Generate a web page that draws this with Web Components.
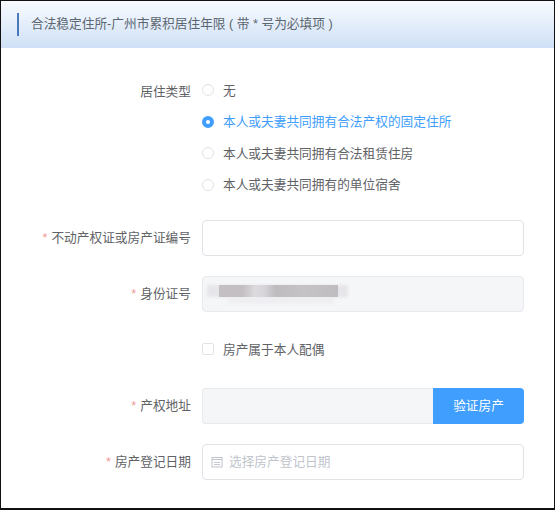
<!DOCTYPE html>
<html lang="zh">
<head>
<meta charset="utf-8">
<title>合法稳定住所</title>
<style>
  html, body { margin: 0; padding: 0; background: #fff; }
  body { font-family: "Liberation Sans", "Noto Sans CJK SC", sans-serif; font-size: 12.7px; color: #606266; }
</style>
</head>
<body>
<form-panel heading="合法稳定住所-广州市累积居住年限 ( 带 * 号为必填项 )">
  <form-row label="居住类型" style="--row-gap:26.4px;--label-top:2px">
    <radio-group>
      <radio-option>无</radio-option>
      <radio-option checked>本人或夫妻共同拥有合法产权的固定住所</radio-option>
      <radio-option>本人或夫妻共同拥有合法租赁住房</radio-option>
      <radio-option>本人或夫妻共同拥有的单位宿舍</radio-option>
    </radio-group>
  </form-row>
  <form-row label="不动产权证或房产证编号" required style="--row-gap:20px"><text-box></text-box></form-row>
  <form-row label="身份证号" required style="--row-gap:26px"><text-box disabled><blur-mask></blur-mask></text-box></form-row>
  <form-row style="--row-gap:30px"><check-option>房产属于本人配偶</check-option></form-row>
  <form-row label="产权地址" required style="--row-gap:20px"><text-box disabled append="验证房产"></text-box></form-row>
  <form-row label="房产登记日期" required><text-box placeholder="选择房产登记日期" date></text-box></form-row>
</form-panel>

<script>
class FormPanel extends HTMLElement {
  constructor() {
    super();
    this.attachShadow({ mode: 'open' });
    this.shadowRoot.innerHTML = `
      <style>
        :host { display: block; box-sizing: border-box; width: 555px; height: 510px; border: 1px solid #111; border-width: 1px 1px 2px 1px; background: #fff; }
        .head { height: 47px; box-sizing: border-box; padding-left: 16px; display: flex; align-items: center; background: linear-gradient(#f8fbff, #cfe0f6); }
        .title { border-left: 2px solid #4a7ab8; height: 23px; line-height: 23px; padding-left: 12px; color: #5b6670; font-size: 12.7px; white-space: nowrap; }
        .body { padding-top: 24px; }
      </style>
      <div class="head"><div class="title"></div></div>
      <div class="body"><slot></slot></div>`;
    this.shadowRoot.querySelector('.title').textContent = this.getAttribute('heading');
  }
}
customElements.define('form-panel', FormPanel);

class FormRow extends HTMLElement {
  constructor() {
    super();
    this.attachShadow({ mode: 'open' });
    this.shadowRoot.innerHTML = `
      <style>
        :host { display: grid; grid-template-columns: 190px 322px; column-gap: 11px; margin-bottom: var(--row-gap, 0); }
        .label { text-align: right; line-height: 36px; padding-top: var(--label-top, 0); color: #606266; white-space: nowrap; }
        .star { color: #f09a9a; margin-right: 4px; }
      </style>
      <div class="label"></div>
      <div><slot></slot></div>`;
    const label = this.shadowRoot.querySelector('.label');
    if (this.hasAttribute('required')) label.innerHTML = '<span class="star">*</span>';
    label.append(this.getAttribute('label') || '');
  }
}
customElements.define('form-row', FormRow);

class RadioGroup extends HTMLElement {
  constructor() {
    super();
    this.attachShadow({ mode: 'open' });
    this.shadowRoot.innerHTML = `
      <style>:host { display: flex; flex-direction: column; gap: 11.6px; padding-top: 7px; }</style>
      <slot></slot>`;
  }
}
customElements.define('radio-group', RadioGroup);

class RadioOption extends HTMLElement {
  constructor() {
    super();
    this.attachShadow({ mode: 'open' });
    this.shadowRoot.innerHTML = `
      <style>
        :host { display: flex; align-items: center; height: 20px; gap: 9px; color: #606266; }
        :host([checked]) { color: #409eff; }
        .dot { width: 12px; height: 12px; margin-top: 2px; box-sizing: border-box; border-radius: 50%; border: 1px solid #e0e2e7; background: #fff; }
        :host([checked]) .dot { border: 4px solid #409eff; }
      </style>
      <span class="dot"></span><slot></slot>`;
  }
}
customElements.define('radio-option', RadioOption);

class CheckOption extends HTMLElement {
  constructor() {
    super();
    this.attachShadow({ mode: 'open' });
    this.shadowRoot.innerHTML = `
      <style>
        :host { display: flex; align-items: center; height: 20px; gap: 9px; color: #606266; }
        .box { width: 12px; height: 12px; margin-top: 2px; box-sizing: border-box; border: 1px solid #e0e2e7; border-radius: 2px; background: #fff; }
      </style>
      <span class="box"></span><slot></slot>`;
  }
}
customElements.define('check-option', CheckOption);

class BlurMask extends HTMLElement {
  constructor() {
    super();
    this.attachShadow({ mode: 'open' });
    this.shadowRoot.innerHTML = `
      <style>
        :host { position: absolute; left: 5px; top: 8px; width: 141px; height: 21px; }
        .halo { position: absolute; left: 0; top: 1px; width: 141px; height: 12px; background: #e6e5e9; filter: blur(1.5px); }
        .under { position: absolute; left: 22px; top: 14px; width: 105px; height: 5px; background: #ecebef; filter: blur(2px); }
        .bar { position: absolute; left: 12px; top: 1px; width: 119px; height: 12px; filter: blur(.6px);
          background: linear-gradient(90deg, #c3bfc2 0, #c3bfc2 20%, #dcdade 30%, #d6d4da 38%, #bfbcbf 48%, #c6c3c6 70%, #c0bdc0 100%); }
      </style>
      <div class="halo"></div><div class="under"></div><div class="bar"></div>`;
  }
}
customElements.define('blur-mask', BlurMask);

class TextBox extends HTMLElement {
  constructor() {
    super();
    this.attachShadow({ mode: 'open' });
    const append = this.getAttribute('append');
    const placeholder = this.getAttribute('placeholder');
    const icon = this.hasAttribute('date') ? `
      <svg width="12" height="12" viewBox="0 0 12 12" fill="none" stroke="#c0c4cc" stroke-width="1">
        <rect x="1" y="1.5" width="10" height="9.5"/>
        <path d="M1 3.5h10M3 6.4h6M3 8.6h6"/>
      </svg>` : '';
    this.shadowRoot.innerHTML = `
      <style>
        :host { display: flex; height: 36px; position: relative; }
        .field { flex: 1; box-sizing: border-box; display: flex; align-items: center; gap: 6px; padding-left: 8px; border: 1px solid #e0e2e7; border-radius: 4px; background: #fff; color: #c0c4cc; line-height: 34px; }
        :host([disabled]) .field { background: #f5f6f8; border-color: #e8e9ed; }
        :host([append]) .field { border-radius: 4px 0 0 4px; border-right: 0; }
        .btn { width: 91px; text-align: center; line-height: 36px; background: #409eff; color: #fff; border-radius: 0 4px 4px 0; }
      </style>
      <div class="field">${icon}${placeholder ? `<span>${placeholder}</span>` : ''}</div>
      ${append ? `<div class="btn">${append}</div>` : ''}
      <slot></slot>`;
  }
}
customElements.define('text-box', TextBox);
</script>
</body>
</html>
